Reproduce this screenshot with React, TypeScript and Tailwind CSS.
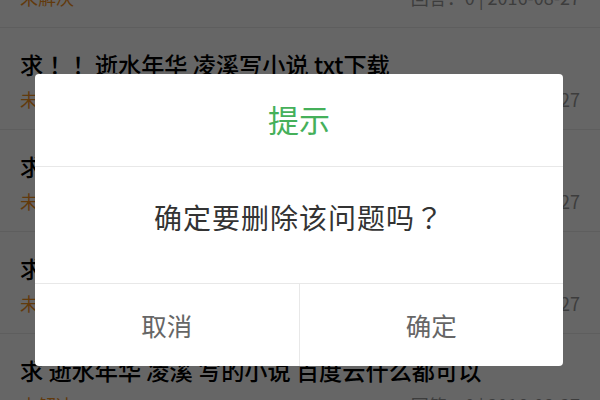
import React from "react";

const P = ({ c }: { c: string }) => (
  <span style={{ fontFamily: '"Noto Sans CJK TC", "Noto Sans CJK SC", sans-serif' }}>{c}</span>
);

const items: { title: React.ReactNode; status: string; meta: string }[] = [
  { title: "求 逝水年华 凌溪写的小说", status: "未解决", meta: "回答：0 | 2016-08-27" },
  {
    title: (
      <>
        求<P c="！" />
        <P c="！" /> 逝水年华 凌溪写小说 txt下载
      </>
    ),
    status: "未解决",
    meta: "回答：0 | 2016-08-27",
  },
  { title: "求 逝水年华 凌溪写的小说 txt", status: "未解决", meta: "回答：0 | 2016-08-27" },
  { title: "求 逝水年华 凌溪 小说 百度云", status: "未解决", meta: "回答：0 | 2016-08-27" },
  { title: "求 逝水年华 凌溪 写的小说 百度云什么都可以", status: "未解决", meta: "回答：0 | 2016-08-27" },
];

const font = { fontFamily: '"Noto Sans CJK SC", "Noto Sans", sans-serif' };

export default function App() {
  return (
    <div className="relative w-[600px] h-[400px] overflow-hidden bg-white" style={font}>
      <div className="flex flex-col -mt-[74px]">
        {items.map((it, i) => (
          <div key={i} className="flex flex-col px-5 pt-[23px] pb-[18px] border-b border-[#ececec]">
            <div className="h-[26px] leading-[26px] text-[23.2px] font-medium text-black whitespace-nowrap">
              {it.title}
            </div>
            <div className="mt-[10px] h-[24px] flex items-center justify-between text-[18px] leading-[24px]">
              <span className="text-[#f5921e]">{it.status}</span>
              <span className="text-[#9a9a9a]">{it.meta}</span>
            </div>
          </div>
        ))}
      </div>

      <div className="absolute inset-0 bg-black/60 pt-[74px] pl-[35px]">
        <div className="w-[528px] h-[292px] bg-white rounded-[4px] flex flex-col overflow-hidden">
          <div className="h-[93px] flex items-center justify-center border-b border-[#e8e8e8]">
            <span className="text-[31px] leading-none text-[#45b05a] -mt-[3px]">提示</span>
          </div>
          <div className="h-[117px] flex items-start justify-center pt-[33px] border-b border-[#e8e8e8]">
            <span className="text-[28px] leading-[34px] text-[#333333] tracking-[1px]">
              确定要删除该问题吗<P c="？" />
            </span>
          </div>
          <div className="flex-1 flex">
            <div className="flex-1 flex items-center justify-center border-r border-[#e8e8e8] text-[25.5px] text-[#666666]">
              取消
            </div>
            <div className="flex-1 flex items-center justify-center text-[25.5px] text-[#666666]">
              确定
            </div>
          </div>
        </div>
      </div>
    </div>
  );
}
